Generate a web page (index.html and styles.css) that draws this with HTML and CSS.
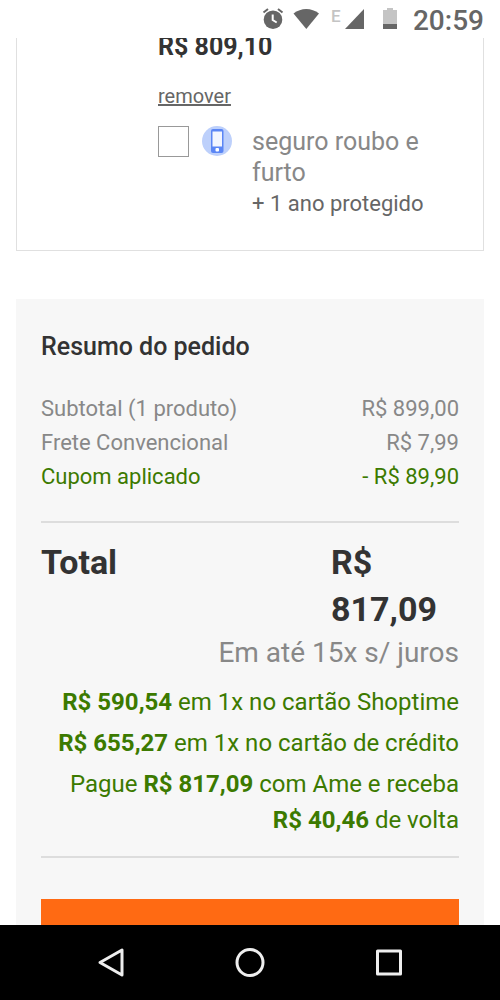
FILE: index.html
```html
<!DOCTYPE html>
<html lang="pt-BR">
<head>
<meta charset="utf-8">
<meta name="viewport" content="width=device-width, initial-scale=1">
<title>Resumo do pedido</title>
<link rel="stylesheet" href="styles.css">
</head>
<body class="screen">
<header class="status">
  <svg class="status-icons" width="138" height="24" viewBox="0 0 138 24" aria-hidden="true">
    <circle cx="11" cy="12.700" r="9.300" fill="#666"/>
    <path d="M1.500 5.500 6 2M20.500 5.500 16 2" stroke="#666" stroke-width="2" fill="none"/>
    <path d="M10.700 7.500v5.500l4 2.500" stroke="#fff" stroke-width="2" fill="none"/>
    <path d="M31.500 6.500C39 .5 49.500 .5 57 6.500L44.300 22Z" fill="#666"/>
    <text x="69" y="14.500" class="network">E</text>
    <path d="M102 2v20H83Z" fill="#666"/>
    <path d="M121 3h4V1h6v2h4v15h-14Z" fill="#c4c4c4"/>
    <path d="M121 17h14v5h-14Z" fill="#666"/>
  </svg>
  <time class="clock">20:59</time>
</header>
<main class="page">
  <section class="product">
    <strong class="price">R$ 809,10</strong>
    <a class="remove" href="#">remover</a>
    <div class="insurance">
      <input class="check" type="checkbox" id="insurance">
      <svg class="phone" width="30" height="30" viewBox="0 0 30 30" aria-hidden="true">
        <circle cx="15" cy="15" r="15" fill="#bdd0fb"/>
        <rect x="9" y="3" width="12.500" height="24" rx="2" fill="#5b86f5"/>
        <rect x="10.500" y="5.500" width="9.500" height="15" fill="#f3f6ff"/>
        <rect x="13.500" y="22" width="3.500" height="3.500" rx="1" fill="#fff"/>
      </svg>
      <label class="insurance-text" for="insurance">
        <span class="insurance-name">seguro roubo e furto</span>
        <span class="insurance-term">+ 1 ano protegido</span>
      </label>
    </div>
  </section>
  <section class="summary">
    <h2 class="title">Resumo do pedido</h2>
    <dl class="lines">
      <div class="line"><dt>Subtotal (1 produto)</dt><dd>R$ 899,00</dd></div>
      <div class="line"><dt>Frete Convencional</dt><dd>R$ 7,99</dd></div>
      <div class="line coupon"><dt>Cupom aplicado</dt><dd>- R$ 89,90</dd></div>
    </dl>
    <div class="totals">
      <div class="total"><span>Total</span><span class="total-value">R$ 817,09</span></div>
      <p class="installments">Em até 15x s/ juros</p>
      <div class="offers">
        <p><b>R$ 590,54</b> em 1x no cartão Shoptime</p>
        <p><b>R$ 655,27</b> em 1x no cartão de crédito</p>
        <p>Pague <b>R$ 817,09</b> com Ame e receba <b>R$ 40,46</b> de volta</p>
      </div>
    </div>
    <button class="buy" type="button" aria-label="Continuar"></button>
  </section>
</main>
<nav class="nav">
  <button class="nav-button" type="button" aria-label="Voltar"><svg width="32" height="32" viewBox="0 0 32 32"><path d="M27 3v25L5 15.500Z" class="nav-shape"/></svg></button>
  <button class="nav-button" type="button" aria-label="Início"><svg width="32" height="32" viewBox="0 0 32 32"><circle cx="16" cy="15.500" r="13" class="nav-shape"/></svg></button>
  <button class="nav-button" type="button" aria-label="Recentes"><svg width="32" height="32" viewBox="0 0 32 32"><rect x="4.500" y="4" width="23" height="23" class="nav-shape"/></svg></button>
</nav>
</body>
</html>
```
FILE: styles.css
```css
* { box-sizing: border-box; }
.screen {
  margin: 0;
  height: 100vh;
  display: flex;
  flex-direction: column;
  overflow: hidden;
  background: #fff;
  color: #333;
  font-family: Roboto, "Liberation Sans", sans-serif;
}
.status {
  flex: none;
  height: 38px;
  padding: 0 16px;
  display: flex;
  align-items: center;
  justify-content: flex-end;
  gap: 13px;
}
.network { font-size: 17px; font-weight: 500; fill: #c4c4c4; }
.clock { font-size: 28px; line-height: 30px; padding-top: 3px; font-weight: 500; color: #666; }
.page { flex: 1; min-height: 0; overflow: hidden; padding: 0 16px; }
.product {
  padding: 0 24px 30px 141px;
  border: 1px solid #e0e0e0;
  border-top: 0;
  display: flex;
  flex-direction: column;
  align-items: flex-start;
}
.price { font-size: 25px; line-height: 18px; }
.remove { margin: 27px 0 17px; font-size: 20px; line-height: 26px; color: #666; }
.insurance { display: flex; align-items: flex-start; }
.check {
  appearance: none;
  flex: none;
  width: 31px;
  height: 31px;
  margin: 0 13px 0 0;
  border: 1px solid #999;
  background: #fff;
}
.phone { flex: none; margin-right: 20px; }
.insurance-text { display: flex; flex-direction: column; max-width: 192px; }
.insurance-name { font-size: 25px; line-height: 31px; color: #888; }
.insurance-term { font-size: 22px; line-height: 32px; color: #666; }
.summary { margin-top: 48px; padding: 33px 25px; background: #f7f7f7; }
.title { margin: 0 0 30px; font-size: 25px; line-height: 30px; font-weight: 500; }
.lines { margin: 0; padding-bottom: 27px; border-bottom: 2px solid #ddd; }
.line { display: flex; justify-content: space-between; font-size: 22px; line-height: 34px; color: #888; }
.line dd { margin: 0; }
.coupon { color: #3c7a00; }
.totals { padding: 16px 0 18px; border-bottom: 2px solid #ddd; }
.total { display: flex; justify-content: space-between; font-size: 34px; line-height: 47px; font-weight: 700; }
.total-value { width: 128px; }
.installments { margin: 0; font-size: 28px; line-height: 39px; color: #888; text-align: right; }
.offers {
  display: flex;
  flex-direction: column;
  gap: 5px;
  padding-top: 12px;
  font-size: 24px;
  line-height: 36px;
  color: #3c7a00;
  text-align: right;
}
.offers p { margin: 0; }
.buy { display: block; width: 100%; height: 72px; margin-top: 41px; border: 0; background: #ff6a13; }
.nav {
  flex: none;
  height: 75px;
  background: #000;
  display: flex;
  align-items: center;
  justify-content: center;
  gap: 107px;
}
.nav-button { display: block; height: 32px; padding: 0; border: 0; background: none; }
.nav-shape { fill: none; stroke: #eee; stroke-width: 3; stroke-linejoin: round; }
```
